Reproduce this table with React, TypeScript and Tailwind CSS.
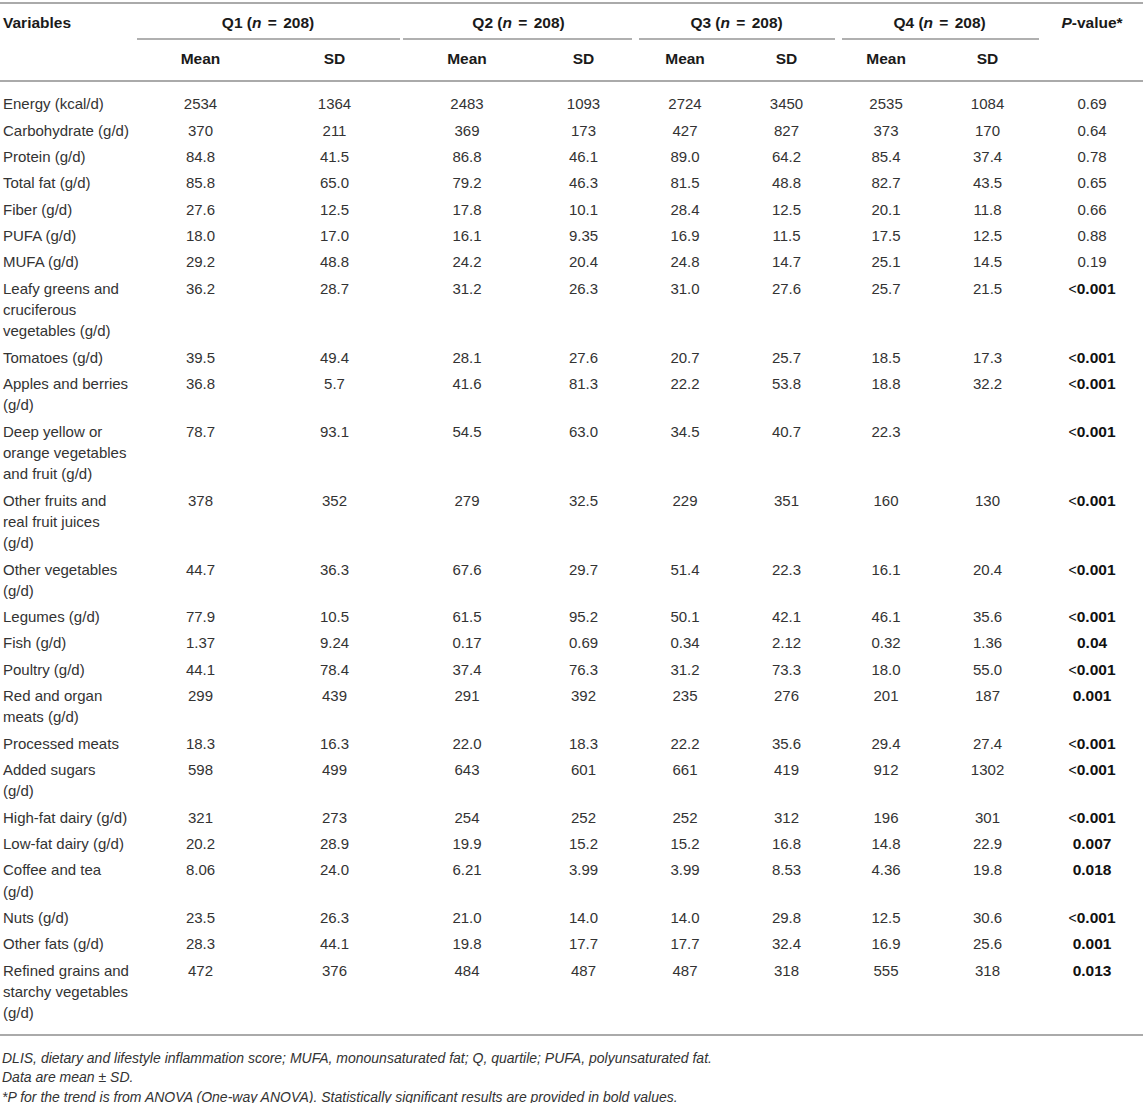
import React from "react";

type Row = { name: string[]; v: string[]; p: string; bold?: boolean };

const rows: Row[] = [
  { name: ["Energy (kcal/d)"], v: ["2534", "1364", "2483", "1093", "2724", "3450", "2535", "1084"], p: "0.69" },
  { name: ["Carbohydrate (g/d)"], v: ["370", "211", "369", "173", "427", "827", "373", "170"], p: "0.64" },
  { name: ["Protein (g/d)"], v: ["84.8", "41.5", "86.8", "46.1", "89.0", "64.2", "85.4", "37.4"], p: "0.78" },
  { name: ["Total fat (g/d)"], v: ["85.8", "65.0", "79.2", "46.3", "81.5", "48.8", "82.7", "43.5"], p: "0.65" },
  { name: ["Fiber (g/d)"], v: ["27.6", "12.5", "17.8", "10.1", "28.4", "12.5", "20.1", "11.8"], p: "0.66" },
  { name: ["PUFA (g/d)"], v: ["18.0", "17.0", "16.1", "9.35", "16.9", "11.5", "17.5", "12.5"], p: "0.88" },
  { name: ["MUFA (g/d)"], v: ["29.2", "48.8", "24.2", "20.4", "24.8", "14.7", "25.1", "14.5"], p: "0.19" },
  { name: ["Leafy greens and", "cruciferous", "vegetables (g/d)"], v: ["36.2", "28.7", "31.2", "26.3", "31.0", "27.6", "25.7", "21.5"], p: "<0.001", bold: true },
  { name: ["Tomatoes (g/d)"], v: ["39.5", "49.4", "28.1", "27.6", "20.7", "25.7", "18.5", "17.3"], p: "<0.001", bold: true },
  { name: ["Apples and berries", "(g/d)"], v: ["36.8", "5.7", "41.6", "81.3", "22.2", "53.8", "18.8", "32.2"], p: "<0.001", bold: true },
  { name: ["Deep yellow or", "orange vegetables", "and fruit (g/d)"], v: ["78.7", "93.1", "54.5", "63.0", "34.5", "40.7", "22.3", ""], p: "<0.001", bold: true },
  { name: ["Other fruits and", "real fruit juices", "(g/d)"], v: ["378", "352", "279", "32.5", "229", "351", "160", "130"], p: "<0.001", bold: true },
  { name: ["Other vegetables", "(g/d)"], v: ["44.7", "36.3", "67.6", "29.7", "51.4", "22.3", "16.1", "20.4"], p: "<0.001", bold: true },
  { name: ["Legumes (g/d)"], v: ["77.9", "10.5", "61.5", "95.2", "50.1", "42.1", "46.1", "35.6"], p: "<0.001", bold: true },
  { name: ["Fish (g/d)"], v: ["1.37", "9.24", "0.17", "0.69", "0.34", "2.12", "0.32", "1.36"], p: "0.04", bold: true },
  { name: ["Poultry (g/d)"], v: ["44.1", "78.4", "37.4", "76.3", "31.2", "73.3", "18.0", "55.0"], p: "<0.001", bold: true },
  { name: ["Red and organ", "meats (g/d)"], v: ["299", "439", "291", "392", "235", "276", "201", "187"], p: "0.001", bold: true },
  { name: ["Processed meats"], v: ["18.3", "16.3", "22.0", "18.3", "22.2", "35.6", "29.4", "27.4"], p: "<0.001", bold: true },
  { name: ["Added sugars", "(g/d)"], v: ["598", "499", "643", "601", "661", "419", "912", "1302"], p: "<0.001", bold: true },
  { name: ["High-fat dairy (g/d)"], v: ["321", "273", "254", "252", "252", "312", "196", "301"], p: "<0.001", bold: true },
  { name: ["Low-fat dairy (g/d)"], v: ["20.2", "28.9", "19.9", "15.2", "15.2", "16.8", "14.8", "22.9"], p: "0.007", bold: true },
  { name: ["Coffee and tea", "(g/d)"], v: ["8.06", "24.0", "6.21", "3.99", "3.99", "8.53", "4.36", "19.8"], p: "0.018", bold: true },
  { name: ["Nuts (g/d)"], v: ["23.5", "26.3", "21.0", "14.0", "14.0", "29.8", "12.5", "30.6"], p: "<0.001", bold: true },
  { name: ["Other fats (g/d)"], v: ["28.3", "44.1", "19.8", "17.7", "17.7", "32.4", "16.9", "25.6"], p: "0.001", bold: true },
  { name: ["Refined grains and", "starchy vegetables", "(g/d)"], v: ["472", "376", "484", "487", "487", "318", "555", "318"], p: "0.013", bold: true },
];

function PVal({ p, bold }: { p: string; bold?: boolean }) {
  if (!bold) return <div className="h-[21.33px] leading-[21.33px]">{p}</div>;
  return (
    <div className="h-[21.33px] leading-[21.33px] overflow-visible flex justify-center items-baseline text-[#111]">
      {p.startsWith("<") && <span className="font-normal text-[14px]">{"<"}</span>}
      <span className="font-bold text-[15.5px]">{p.replace("<", "")}</span>
    </div>
  );
}

function Group({ q, lineCls }: { q: string; lineCls: string }) {
  return (
    <th colSpan={2} className="p-0 pt-[8px] align-top font-bold text-center">
      <div className="leading-[21.33px] whitespace-nowrap">
        {q} (<i>n</i>
        <span className="px-[2px]"> = </span>
        208)
      </div>
      <div className={"h-[6.67px] border-b-2 border-[#b0b0b0] " + lineCls}></div>
    </th>
  );
}

export default function App() {
  return (
    <div
      className="w-[1143px] pt-[2px] bg-white text-[15px] text-[#333]"
      style={{ fontFamily: '"Liberation Sans", Arial, sans-serif' }}
    >
      <div className="border-t-2 border-b-2 border-[#aaaaaa]">
        <table className="table-fixed w-[1143px] border-separate border-spacing-0">
          <colgroup>
            <col className="w-[134px]" />
            <col className="w-[133px]" />
            <col className="w-[135px]" />
            <col className="w-[130px]" />
            <col className="w-[103px]" />
            <col className="w-[100px]" />
            <col className="w-[103px]" />
            <col className="w-[96px]" />
            <col className="w-[107px]" />
            <col className="w-[102px]" />
          </colgroup>
          <thead className="text-[#1a1a1a] text-[15.5px]">
            <tr>
              <th
                rowSpan={2}
                className="p-0 pl-[3px] pt-[8px] align-top text-left font-bold leading-[21.33px] border-b-2 border-[#aaaaaa]"
              >
                Variables
              </th>
              <Group q="Q1" lineCls="ml-[2.5px] mr-[2px]" />
              <Group q="Q2" lineCls="ml-[1px] mr-[3px]" />
              <Group q="Q3" lineCls="ml-[4px] mr-[3px]" />
              <Group q="Q4" lineCls="ml-[4px] mr-[2px]" />
              <th
                rowSpan={2}
                className="p-0 pt-[8px] align-top text-center font-bold leading-[21.33px] border-b-2 border-[#aaaaaa]"
              >
                <i>P</i>-value*
              </th>
            </tr>
            <tr>
              {["Mean", "SD", "Mean", "SD", "Mean", "SD", "Mean", "SD"].map((h, i) => (
                <th
                  key={i}
                  className="p-0 pt-[8.5px] pb-[10.17px] text-center font-bold leading-[21.33px] border-b-2 border-[#aaaaaa]"
                >
                  {h}
                </th>
              ))}
            </tr>
          </thead>
          <tbody>
            <tr>
              <td colSpan={10} className="p-0 h-[8.8px]"></td>
            </tr>
            {rows.map((r, i) => (
              <tr key={i}>
                <td className="p-0 pl-[3px] py-[2.5px] align-top text-left leading-[21.33px] whitespace-nowrap">
                  {r.name.map((n, j) => (
                    <div key={j}>{n}</div>
                  ))}
                </td>
                {r.v.map((v, j) => (
                  <td key={j} className="p-0 py-[2.5px] align-top text-center leading-[21.33px]">
                    {v}
                  </td>
                ))}
                <td className="p-0 py-[2.5px] align-top text-center leading-[21.33px]">
                  <PVal p={r.p} bold={r.bold} />
                </td>
              </tr>
            ))}
            <tr>
              <td colSpan={10} className="p-0 h-[8.2px]"></td>
            </tr>
          </tbody>
        </table>
      </div>
      <div className="pl-[2px] pt-[12.5px] italic text-[14px] leading-[19.5px] text-[#333] whitespace-nowrap">
        <div>DLIS, dietary and lifestyle inflammation score; MUFA, monounsaturated fat; Q, quartile; PUFA, polyunsaturated fat.</div>
        <div>Data are mean ± SD.</div>
        <div>*P for the trend is from ANOVA (One-way ANOVA). Statistically significant results are provided in bold values.</div>
      </div>
    </div>
  );
}
